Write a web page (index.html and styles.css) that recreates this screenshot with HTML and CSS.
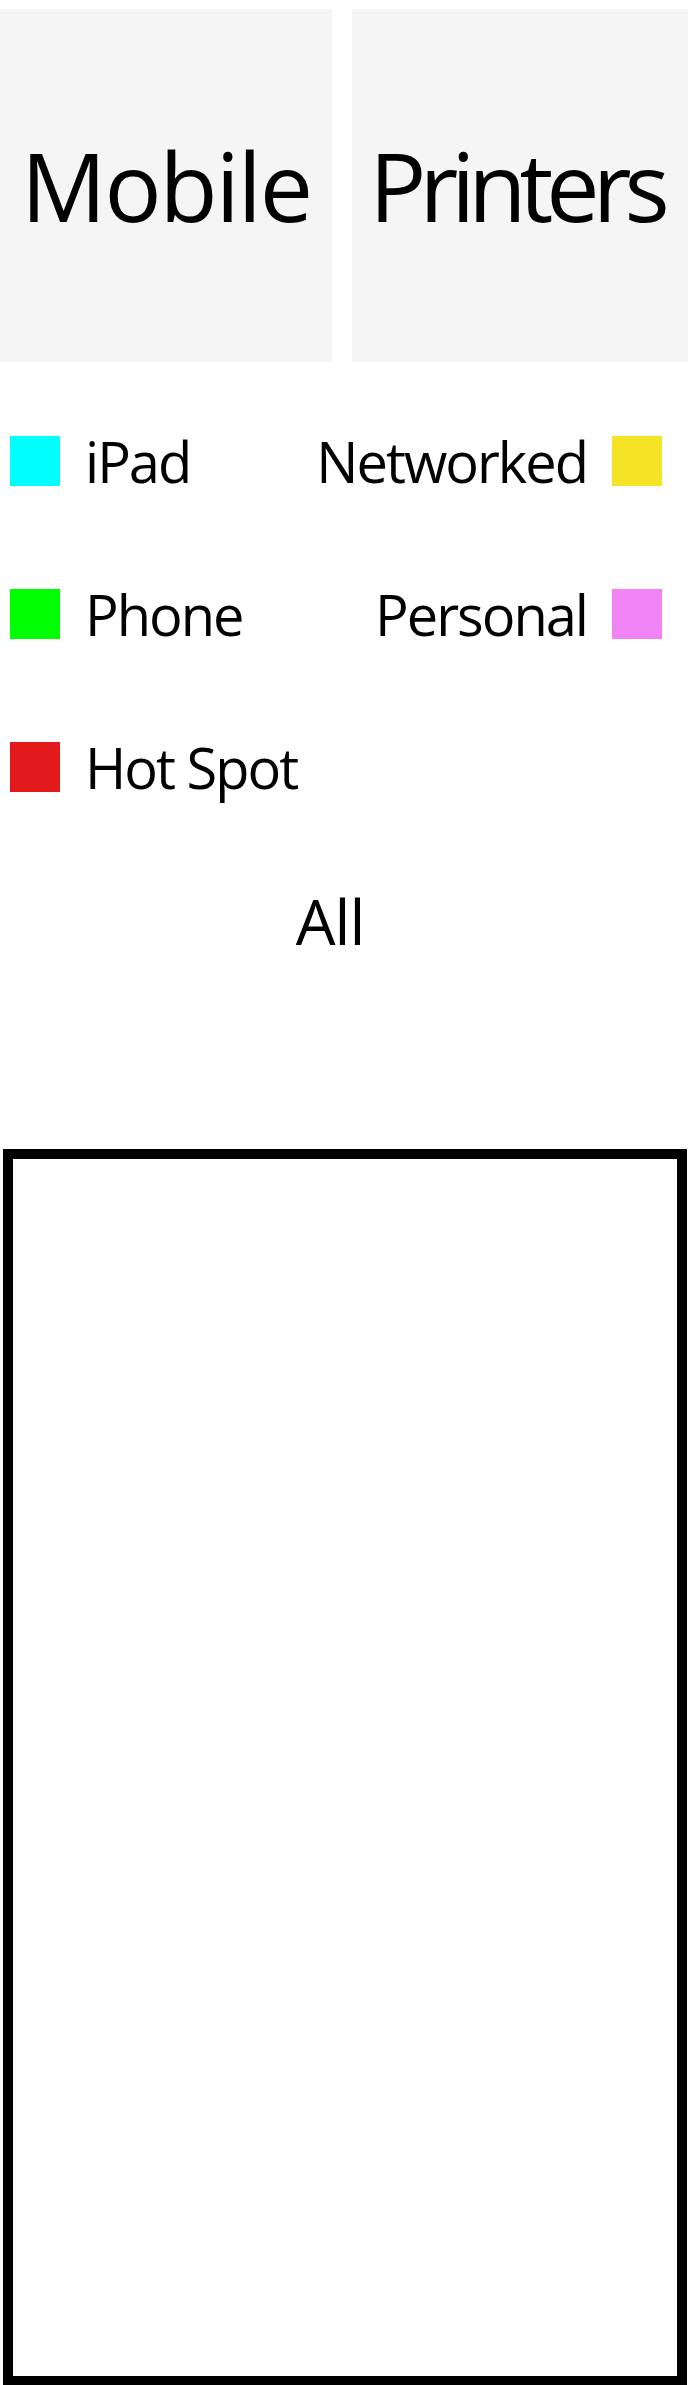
FILE: index.html
```html
<!DOCTYPE html>
<html>
	<head>
		<meta charset="UTF-8">
		<title>Devices</title>
		<link rel="stylesheet" href="styles.css">
	</head>
	<body>
		<div class="tabs">
			<div class="tab tab-left">Mobile</div>
			<div class="tab tab-right">Printers</div>
		</div>
		<ul class="legend">
			<li class="item"><span class="swatch cyan"></span><span>iPad</span></li>
			<li class="item item-right"><span>Networked</span><span class="swatch yellow"></span></li>
			<li class="item"><span class="swatch green"></span><span>Phone</span></li>
			<li class="item item-right"><span>Personal</span><span class="swatch pink"></span></li>
			<li class="item"><span class="swatch red"></span><span>Hot Spot</span></li>
		</ul>
		<div class="all">All</div>
		<div class="frame"></div>
	</body>
</html>
```

FILE: styles.css
```css
body{
	margin: 0;
	font-family: "Open Sans", "Liberation Sans", sans-serif;
	color: #000;
	background: #fff;
}
.tabs{
	display: flex;
	gap: 20px;
	padding-top: 9px;
	width: 688px;
}
.tab{
	height: 353px;
	background: #f5f5f5;
	display: flex;
	align-items: center;
	justify-content: center;
	font-size: 95px;
	letter-spacing: -2px;
	line-height: 1;
}
.tab-left{
	width: 332px;
}
.tab-right{
	width: 336px;
	letter-spacing: -7px;
	padding-right: 8px;
	box-sizing: border-box;
}
.legend{
	margin: 74px 0 0 0;
	padding: 0 31px 0 10px;
	list-style: none;
	display: grid;
	grid-template-columns: 1fr 1fr;
	row-gap: 103px;
}
.item{
	display: flex;
	align-items: center;
	gap: 25px;
	height: 50px;
	font-size: 56px;
	letter-spacing: -2px;
	line-height: 50px;
}
.item-right{
	justify-content: flex-end;
	gap: 25px;
}
.swatch{
	width: 50px;
	height: 50px;
	flex: none;
}
.cyan{ background: #00ffff; }
.green{ background: #00ff00; }
.red{ background: #e31a1c; }
.yellow{ background: #f5e326; }
.pink{ background: #f084f5; }
.all{
	margin-top: 97px;
	width: 660px;
	text-align: center;
	font-size: 63px;
	line-height: 63px;
	letter-spacing: -1px;
}
.frame{
	margin: 197px 0 0 3px;
	width: 684px;
	height: 1237px;
	box-sizing: border-box;
	border: 10px solid #000;
}
```
